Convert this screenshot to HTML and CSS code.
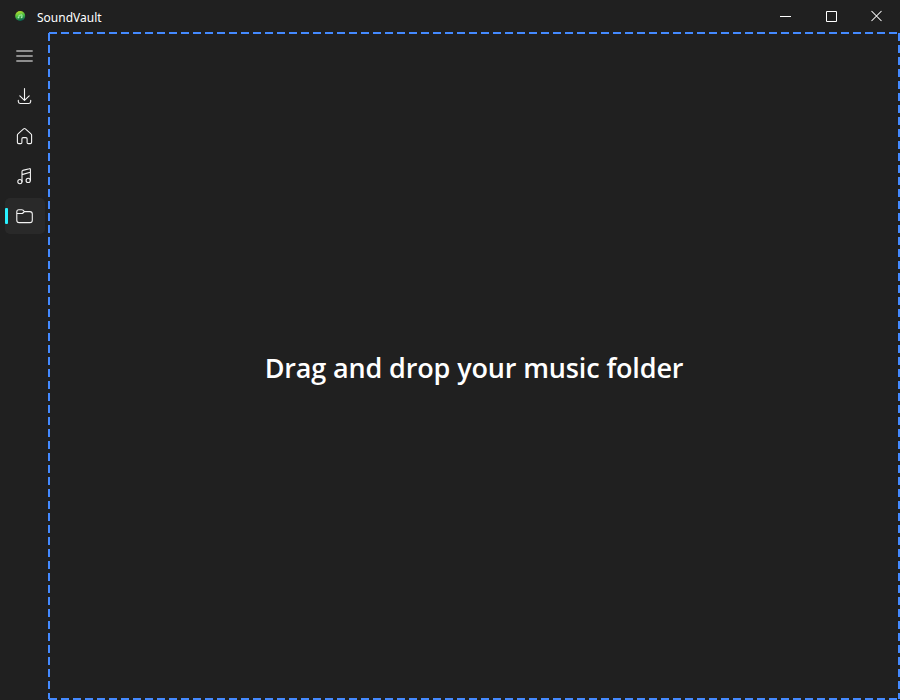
FILE: index.html
```
<!DOCTYPE html>
<html lang="en">
<head>
<meta charset="utf-8">
<title>SoundVault</title>
<link rel="stylesheet" href="styles.css">
</head>
<body>
<header class="titlebar">
  <svg class="logo" width="12" height="12" viewBox="0 0 12 12">
    <defs><linearGradient id="g" x1="0.2" y1="0" x2="0.5" y2="1"><stop offset="0" stop-color="#c4e02c"/><stop offset=".5" stop-color="#4cc040"/><stop offset="1" stop-color="#075c50"/></linearGradient></defs>
    <circle cx="6.200" cy="6" r="5" fill="url(#g)"/>
    <path d="M4.900 7.600V5.400L8 4.800V7.300" fill="none" stroke="#a9edb0" stroke-width=".9"/>
    <circle cx="4.400" cy="7.600" r=".8" fill="#a9edb0"/><circle cx="7.600" cy="7.400" r=".8" fill="#a9edb0"/>
  </svg>
  <span class="app-name">SoundVault</span>
  <div class="controls">
    <button class="control" aria-label="Minimize"><svg width="46" height="32"><path d="M18 16.5h11" stroke="#fff"/></svg></button>
    <button class="control" aria-label="Maximize"><svg width="46" height="32"><path d="M18.500 11.500h10v10h-10z" fill="none" stroke="#fff"/></svg></button>
    <button class="control" aria-label="Close"><svg width="46" height="32"><path d="M17.500 11l10 10m0-10l-10 10" stroke="#fff" stroke-width="1.050"/></svg></button>
  </div>
</header>
<div class="body">
  <nav class="sidebar">
    <button class="item menu" aria-label="Menu"><svg class="icon" viewBox="0 0 18 18"><path d="M1.300 4h16.400M1.300 9h16.400M1.300 14h16.400"/></svg></button>
    <button class="item" aria-label="Download"><svg class="icon" viewBox="0 0 18 18"><path d="M9.500 1.500v11.700M4.800 8.800l4.700 4.500 4.700-4.500M3.300 13.300v1.300q0 1.900 1.900 1.900h8.600q1.900 0 1.900-1.900v-1.300"/></svg></button>
    <button class="item" aria-label="Home"><svg class="icon" viewBox="0 0 18 18"><path d="M2.400 8.100q0-.8.600-1.300l5.600-4.900q.9-.7 1.800 0l5.600 4.900q.6.500.6 1.300v7.200q0 1.300-1.300 1.300h-2q-1.200 0-1.200-1.200v-3.600q0-1.200-1.200-1.200H8.100q-1.200 0-1.200 1.200v3.600q0 1.200-1.200 1.200h-2q-1.300 0-1.300-1.300z"/></svg></button>
    <button class="item" aria-label="Music"><svg class="icon" viewBox="0 0 18 18"><circle cx="4.900" cy="14.600" r="2.100"/><circle cx="13.200" cy="13.400" r="2.100"/><path d="M7 14.500V4.500q0-.8.800-1.100l6.600-1.700q1-.3 1 .7v10.900M7 7.600l8.300-2.400"/></svg></button>
    <button class="item active" aria-label="Folder"><svg class="icon" viewBox="0 0 18 18"><path d="M1.800 13.200V4.700q0-2 2-2h3q.7 0 1.200.5l1.400 1.400h5.500q2.400 0 2.400 2.400v6.200q0 2.400-2.400 2.400H4.200q-2.400 0-2.400-2.400zM1.800 6.500h5q.7 0 1.200-.5l1.400-1.400"/></svg></button>
  </nav>
  <main class="dropzone">
    <svg class="outline" width="852" height="668" aria-hidden="true">
      <path d="M1 1H851M1 667H851M1 1V667M851 1V667"/>
    </svg>
    <h1 class="prompt">Drag and drop your music folder</h1>
  </main>
</div>
</body>
</html>
```
FILE: styles.css
```
* { box-sizing: border-box; }
body {
  margin: 0;
  width: 900px;
  height: 700px;
  overflow: hidden;
  display: flex;
  flex-direction: column;
  background: #202020;
  color: #fff;
  font-family: "Segoe UI", "Open Sans", "Noto Sans", sans-serif;
}
button { border: 0; padding: 0; background: none; }
svg { display: block; }
.titlebar { display: flex; height: 32px; padding-left: 14px; }
.logo { margin-top: 10px; }
.app-name {
  margin-left: 11px;
  font-family: "Segoe UI", "Noto Sans", sans-serif;
  font-size: 12px;
  line-height: 36px;
  white-space: nowrap;
}
.controls { display: flex; margin-left: auto; }
.control { width: 46px; height: 32px; }
.body { display: flex; height: 668px; }
.sidebar {
  width: 48px;
  padding: 6px 3px 0 5px;
  display: flex;
  flex-direction: column;
  gap: 4px;
}
.item {
  position: relative;
  display: flex;
  align-items: center;
  width: 40px;
  height: 36px;
  padding-left: 10px;
  border-radius: 5px;
}
.active { background: #292929; }
.active::before {
  content: "";
  position: absolute;
  left: 0;
  top: 10px;
  width: 3px;
  height: 16px;
  border-radius: 1px;
  background: #29f1ff;
}
.icon {
  width: 18px;
  height: 18px;
  fill: none;
  stroke: #f4f4f4;
  stroke-width: 1.1;
  stroke-linecap: round;
  stroke-linejoin: round;
}
.menu .icon {
  stroke: #8e8e8e;
  stroke-width: 2;
  stroke-linecap: butt;
}
.dropzone {
  position: relative;
  flex: 1;
  display: flex;
  align-items: center;
  justify-content: center;
}
.outline { position: absolute; inset: 0; }
.outline path {
  fill: none;
  stroke: #448aff;
  stroke-width: 2;
  stroke-dasharray: 8 4;
}
.prompt {
  margin: 0;
  padding-top: 3px;
  font-size: 27px;
  font-weight: 600;
  letter-spacing: -0.14px;
  line-height: 38px;
  white-space: nowrap;
}
```
